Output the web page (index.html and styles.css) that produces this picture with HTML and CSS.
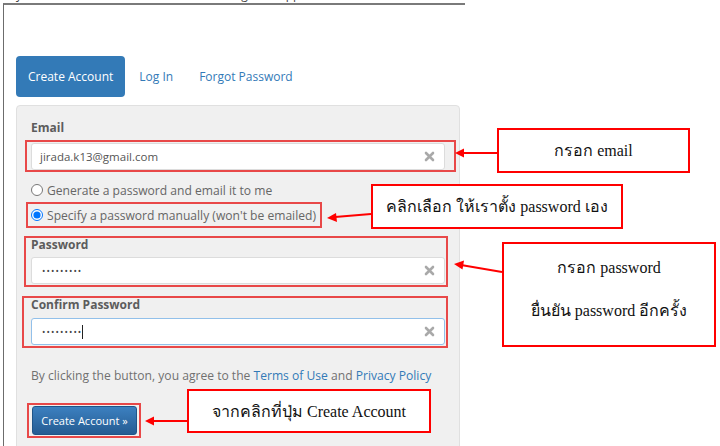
FILE: index.html
```html
<!DOCTYPE html>
<html lang="th">
<head>
    <meta charset="UTF-8">
    <meta name="viewport" content="width=device-width, initial-scale=1.0">
    <title>Create Account</title>
    <link rel="stylesheet" href="styles.css">
</head>
<body>
    <div class="topnav">
        <span class="brand">Jirada Studio</span>
        <span>API</span>
        <span>Pricing</span>
        <span>Support</span>
    </div>

    <div class="frame">
        <ul class="tabs">
            <li class="tab active">Create Account</li>
            <li class="tab">Log In</li>
            <li class="tab">Forgot Password</li>
        </ul>

        <div class="panel">
            <div class="label email-label">Email</div>
            <div class="mark mark-email">
                <div class="field">
                    <span class="value">jirada.k13@gmail.com</span>
                    <svg class="clear" width="11" height="11" viewBox="0 0 11 11"><path d="M2 2L9 9M9 2L2 9" stroke="#a9a9a9" stroke-width="2.6" stroke-linecap="round"/></svg>
                </div>
            </div>

            <label class="radio-row first">
                <input type="radio" name="mode"> Generate a password and email it to me
            </label>
            <div class="mark mark-radio">
                <label class="radio-row">
                    <input type="radio" name="mode" checked> Specify a password manually (won't be emailed)
                </label>
            </div>

            <div class="mark mark-pass">
                <div class="label">Password</div>
                <div class="field">
                    <span class="dots">•••••••••</span>
                    <svg class="clear" width="11" height="11" viewBox="0 0 11 11"><path d="M2 2L9 9M9 2L2 9" stroke="#a9a9a9" stroke-width="2.6" stroke-linecap="round"/></svg>
                </div>
            </div>

            <div class="mark mark-confirm">
                <div class="label">Confirm Password</div>
                <div class="field focus">
                    <span class="dots">•••••••••</span><span class="caret"></span>
                    <svg class="clear" width="11" height="11" viewBox="0 0 11 11"><path d="M2 2L9 9M9 2L2 9" stroke="#a9a9a9" stroke-width="2.6" stroke-linecap="round"/></svg>
                </div>
            </div>

            <p class="agree">By clicking the button, you agree to the <a href="#">Terms of Use</a> and <a href="#">Privacy Policy</a></p>

            <div class="mark mark-button">
                <button class="create-button">Create Account &raquo;</button>
            </div>
        </div>
    </div>

    <!-- คำอธิบายประกอบ -->
    <div class="note note-email">กรอก email</div>
    <div class="note note-radio">คลิกเลือก ให้เราตั้ง password เอง</div>
    <div class="note note-pass">
        <div>กรอก password</div>
        <div>ยื่นยัน password อีกครั้ง</div>
    </div>
    <div class="note note-button">จากคลิกที่ปุ่ม Create Account</div>

    <svg class="arrows" width="720" height="446" viewBox="0 0 720 446">
        <g stroke="#ff0000" stroke-width="2" fill="none">
            <line x1="497" y1="153" x2="462" y2="153"/>
            <line x1="371" y1="214" x2="335" y2="217"/>
            <line x1="502" y1="272" x2="461" y2="265"/>
            <line x1="187" y1="421" x2="152" y2="421"/>
        </g>
        <g fill="#ff0000">
            <polygon points="455,153 464,148.5 464,157.5"/>
            <polygon points="327,218 336,213 337,222"/>
            <polygon points="454,264 464,260.5 462.5,269.5"/>
            <polygon points="145,421 154,416.5 154,425.5"/>
        </g>
    </svg>
</body>
</html>
```

FILE: styles.css
```css
body {
    margin: 0;
    background-color: #fff;
    font-family: "Open Sans", "Noto Sans", sans-serif;
    color: #666;
    width: 720px;
    height: 446px;
    overflow: hidden;
    position: relative;
}

/* แถบเมนูด้านบนที่ถูกตัดออก */
.topnav {
    height: 3px;
    overflow: hidden;
    display: flex;
    gap: 24px;
    padding-left: 17px;
    font-size: 12px;
    line-height: 12px;
    color: #444;
}

.topnav span {
    margin-top: -11px;
}

.topnav .brand {
    margin-right: 56px;
}

.frame {
    margin-left: 3px;
    width: 462px;
    height: 443px;
    border-top: 2px solid #7a7a7a;
    border-left: 1px solid #6c6c6c;
    padding-left: 12px;
    box-sizing: border-box;
}

.tabs {
    list-style: none;
    margin: 51px 0 0 0;
    padding: 0;
    display: flex;
}

.tab {
    height: 41px;
    line-height: 41px;
    padding: 0 12px;
    margin-right: 2px;
    font-size: 12px;
    color: #337ab7;
    border-radius: 4px;
}

.tab.active {
    background-color: #337ab7;
    color: #fff;
    padding: 0 12px;
}

.panel {
    margin-top: 8px;
    width: 444px;
    height: 360px;
    box-sizing: border-box;
    background-color: #f0f0f0;
    border: 1px solid #e0e0e0;
    border-radius: 4px;
    padding: 14px 14px 0 14px;
}

.label {
    font-size: 12px;
    font-weight: bold;
    color: #5c5c5c;
    line-height: 14px;
}

.email-label {
    line-height: 16px;
    margin-bottom: 4px;
}

.mark {
    border: 2px solid #e84848;
    box-sizing: border-box;
}

.field {
    height: 27px;
    box-sizing: border-box;
    background-color: #fff;
    border: 1px solid #dcdcdc;
    border-radius: 3px;
    padding: 0 9px 0 8px;
    display: flex;
    align-items: center;
    font-size: 11.5px;
    color: #555;
}

.field.focus {
    border-color: #92c0ea;
}

.field .clear {
    margin-left: auto;
}

.dots {
    font-size: 9px;
    letter-spacing: 1.1px;
    padding-left: 2px;
    color: #444;
}

.caret {
    width: 1px;
    height: 14px;
    background-color: #222;
}

.mark-email {
    margin: 0 -11px 0 -6px;
    padding: 1px 9px 0 4px;
}

.radio-row {
    display: flex;
    align-items: center;
    gap: 4px;
    height: 18px;
    font-size: 12.1px;
    color: #666;
}

.radio-row input {
    margin: 0;
    width: 12px;
    height: 12px;
}

.radio-row.first {
    margin-top: 9px;
}

.mark-radio {
    margin: 3px 0 0 -5px;
    width: fit-content;
    padding: 2px 4px 2px 3px;
}

.mark-pass {
    margin: 8px -3px 0 -7px;
    padding: 0 1px 1px 5px;
}

.mark-pass .field {
    margin-top: 5px;
}

.mark-confirm {
    margin: 9px -3px 0 -9px;
    padding: 0 1px 1px 7px;
}

.mark-confirm .field {
    margin-top: 6px;
}

.agree {
    margin: 19px 0 0 0;
    line-height: 18px;
    font-size: 12.1px;
    color: #707070;
}

.agree a {
    color: #337ab7;
    text-decoration: none;
}

.mark-button {
    margin: 18px 0 0 -4px;
    width: fit-content;
    padding: 1px 2px 1px 3px;
}

.create-button {
    display: block;
    width: 105px;
    height: 29px;
    border: 1px solid #1f5588;
    border-radius: 3px;
    background: linear-gradient(#3c80c0, #255c92);
    color: #fff;
    font-family: "Open Sans", "Noto Sans", sans-serif;
    font-size: 11px;
    padding: 0;
}

/* กล่องข้อความอธิบาย */
.note {
    position: absolute;
    box-sizing: border-box;
    border: 2px solid #ff0000;
    background-color: #fff;
    color: #111;
    font-family: "Liberation Serif", serif;
    font-size: 16px;
    display: flex;
    align-items: center;
    justify-content: center;
}

.note-email {
    left: 497px;
    top: 128px;
    width: 193px;
    height: 45px;
}

.note-radio {
    left: 371px;
    top: 184px;
    width: 252px;
    height: 45px;
}

.note-pass {
    left: 502px;
    top: 242px;
    width: 214px;
    height: 105px;
    flex-direction: column;
    gap: 18px;
    padding-bottom: 12px;
}

.note-button {
    left: 187px;
    top: 389px;
    width: 244px;
    height: 44px;
}

.arrows {
    position: absolute;
    left: 0;
    top: 0;
    pointer-events: none;
}
```
